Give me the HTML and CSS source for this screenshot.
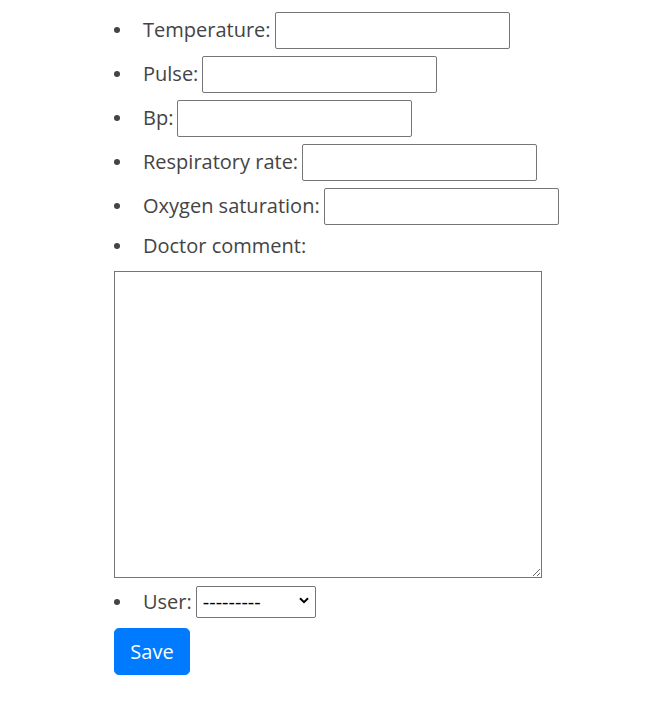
FILE: index.html
```html
<!DOCTYPE html>
<html>
<head>
<meta charset="utf-8">
<link rel="stylesheet" href="styles.css">
</head>
<body>
<form class="vitals">
  <ul class="fields">
    <li class="field"><label class="label">Temperature:</label><input class="text-input" type="text"></li>
    <li class="field"><label class="label">Pulse:</label><input class="text-input" type="text"></li>
    <li class="field"><label class="label">Bp:</label><input class="text-input" type="text"></li>
    <li class="field"><label class="label">Respiratory rate:</label><input class="text-input" type="text"></li>
    <li class="field"><label class="label">Oxygen saturation:</label><input class="text-input" type="text"></li>
    <li class="field field-plain"><label class="label">Doctor comment:</label></li>
  </ul>
  <textarea class="comment"></textarea>
  <ul class="fields">
    <li class="field field-user"><label class="label">User:</label><span class="select-wrap"><select class="user-select"><option>---------</option></select><svg class="chevron" width="10" height="7" viewBox="0 0 10 7"><path d="M1 1.2 L5 5.2 L9 1.2" fill="none" stroke="#000" stroke-width="2"/></svg></span></li>
  </ul>
  <button class="save" type="button">Save</button>
</form>
</body>
</html>
```
FILE: styles.css
```css
html, body {
  margin: 0;
  padding: 0;
  background: #fff;
}
body {
  font-family: "Open Sans", "Noto Sans", sans-serif;
  font-size: 20px;
  line-height: 30px;
  color: #444;
}
.vitals {
  padding: 8px 0 0 114px;
}
.fields {
  list-style: none;
  margin: 0;
  padding: 0;
}
.field {
  display: flex;
  align-items: center;
  height: 44px;
}
.field::before {
  content: "";
  width: 6px;
  height: 6px;
  border-radius: 50%;
  background: #444;
  margin: 0 23px 0 0;
  flex: none;
}
.label {
  margin-right: 4px;
}
.text-input {
  box-sizing: border-box;
  width: 235px;
  height: 37px;
  border: 1px solid #767676;
  border-radius: 2px;
  padding: 1px 2px;
  font: inherit;
  margin: 0;
}
.field-plain {
  height: 36px;
}
.comment {
  display: block;
  box-sizing: border-box;
  width: 428px;
  height: 307px;
  margin: 7px 0 0 0;
  border: 1px solid #767676;
  border-radius: 0;
  padding: 2px;
  resize: both;
}
.field-user {
  height: 32px;
  margin-top: 8px;
}
.select-wrap {
  position: relative;
  display: inline-block;
  height: 32px;
}
.user-select {
  -webkit-appearance: none;
  appearance: none;
  display: block;
  box-sizing: border-box;
  width: 120px;
  height: 32px;
  font-family: "Open Sans", "Noto Sans", sans-serif;
  font-size: 20px;
  line-height: 30px;
  color: #000;
  border: 1px solid #767676;
  border-radius: 2px;
  background: #fff;
  padding: 0 0 0 6px;
  margin: 0;
}
.chevron {
  position: absolute;
  right: 7px;
  top: 11px;
  pointer-events: none;
}
.save {
  display: block;
  box-sizing: border-box;
  margin-top: 10px;
  width: 76px;
  height: 47px;
  background: #007bff;
  color: #fff;
  border: 1px solid #007bff;
  border-radius: 4.8px;
  font-family: "Open Sans", "Noto Sans", sans-serif;
  font-size: 20px;
  line-height: 30px;
  padding: 0;
}
```
